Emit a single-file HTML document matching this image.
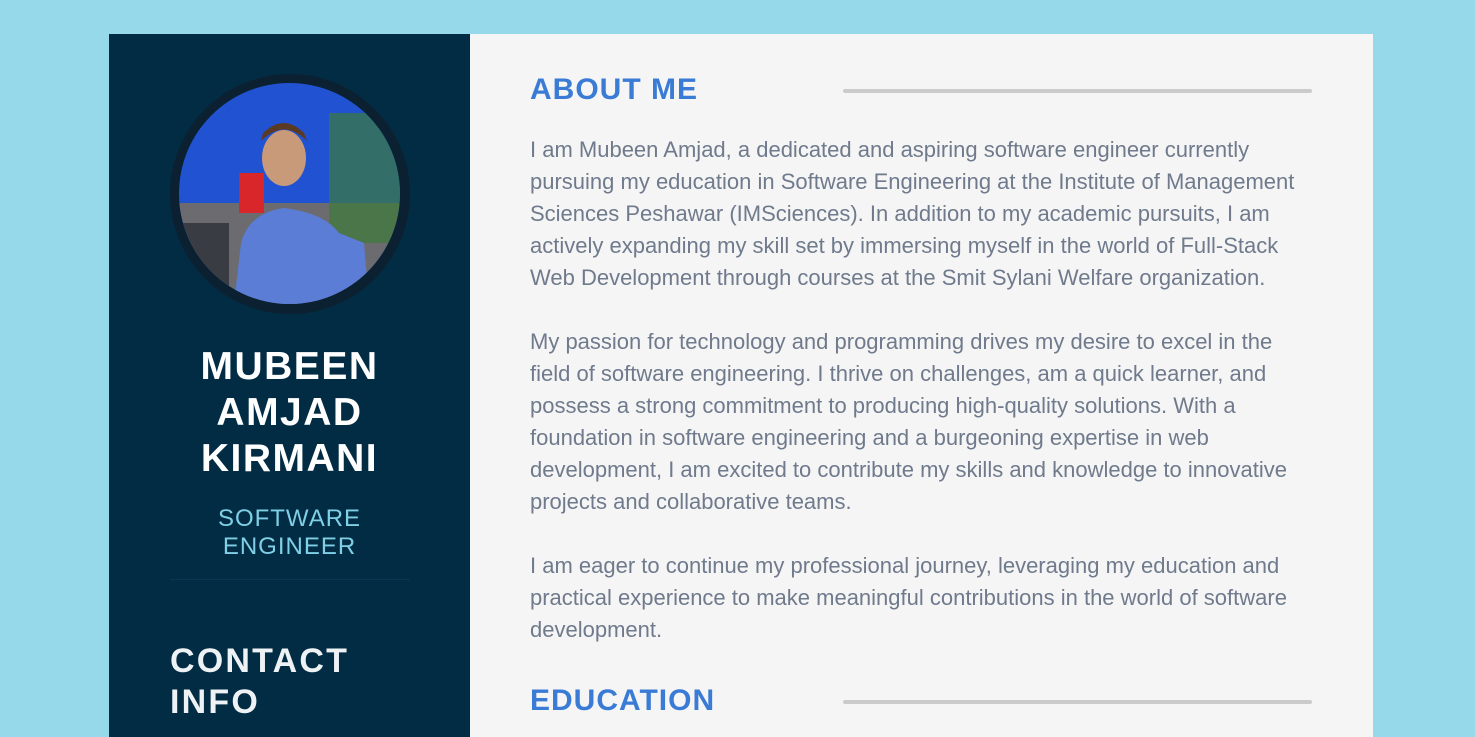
<!DOCTYPE html>
<html><head><meta charset="utf-8"><style>
*{margin:0;padding:0;box-sizing:border-box}
html,body{width:1475px;height:737px;overflow:hidden;background:#95d9ea;font-family:"Liberation Sans",Arial,sans-serif}
.left{position:absolute;left:109px;top:34px;width:361px;height:703px;background:#022c44}
.right{position:absolute;left:470px;top:34px;width:903px;height:703px;background:#f5f5f5}
.ring{position:absolute;left:170px;top:74px;width:240px;height:240px;border-radius:50%;background:#0b2131}
.photo{position:absolute;left:179px;top:83px;width:221px;height:221px;border-radius:50%;overflow:hidden}
.name{position:absolute;left:109px;width:361px;top:344px;text-align:center;color:#fff;font-weight:bold;font-size:39px;line-height:46px;letter-spacing:1.5px}
.title{position:absolute;left:109px;width:361px;top:505px;text-align:center;color:#7fd0e6;font-size:24px;line-height:28px;letter-spacing:1px}
.div{position:absolute;left:170px;top:579px;width:240px;height:1px;background:#0d3550}
.contact{position:absolute;left:170px;top:641px;color:#eef2f5;font-weight:bold;font-size:34px;line-height:41px;letter-spacing:2.2px}
h2{position:absolute;left:530px;color:#3a7bd5;font-size:30px;font-weight:bold;letter-spacing:1px}
.line{position:absolute;left:843px;width:469px;height:4px;background:#cbcbcb;border-radius:2px}
.body{position:absolute;left:530px;top:134px;width:775px;color:#6f7a8c;font-size:22px;line-height:32px}
.body p{margin-bottom:32px}
</style></head><body>
<div class="left"></div>
<div class="right"></div>
<div class="ring"></div>
<div class="photo">
<svg width="221" height="221" viewBox="0 0 221 221">
<rect width="221" height="221" fill="#2152d2"/>
<rect y="120" width="221" height="101" fill="#6b6b70"/>
<rect x="150" y="30" width="71" height="130" fill="#3c7a3a" opacity=".7"/>
<rect x="60" y="90" width="25" height="40" fill="#d8262a"/>
<ellipse cx="105" cy="75" rx="22" ry="28" fill="#c89a7a"/>
<path d="M82 58 Q105 35 128 58 L125 50 Q105 30 84 50Z" fill="#5a3a22"/>
<path d="M55 221 L62 160 Q70 130 105 125 Q145 130 160 150 L185 160 L190 221Z" fill="#5b7dd6"/>
<rect x="0" y="140" width="50" height="81" fill="#3a3c44"/>
</svg>
</div>
<div class="name">MUBEEN<br>AMJAD<br>KIRMANI</div>
<div class="title">SOFTWARE<br>ENGINEER</div>
<div class="div"></div>
<div class="contact">CONTACT<br>INFO</div>

<h2 style="top:73px">ABOUT ME</h2>
<div class="line" style="top:89px"></div>
<div class="body">
<p>I am Mubeen Amjad, a dedicated and aspiring software engineer currently pursuing my education in Software Engineering at the Institute of Management Sciences Peshawar (IMSciences). In addition to my academic pursuits, I am actively expanding my skill set by immersing myself in the world of Full-Stack Web Development through courses at the Smit Sylani Welfare organization.</p>
<p>My passion for technology and programming drives my desire to excel in the field of software engineering. I thrive on challenges, am a quick learner, and possess a strong commitment to producing high-quality solutions. With a foundation in software engineering and a burgeoning expertise in web development, I am excited to contribute my skills and knowledge to innovative projects and collaborative teams.</p>
<p>I am eager to continue my professional journey, leveraging my education and practical experience to make meaningful contributions in the world of software development.</p>
</div>
<h2 style="top:684px">EDUCATION</h2>
<div class="line" style="top:700px"></div>
</body></html>
